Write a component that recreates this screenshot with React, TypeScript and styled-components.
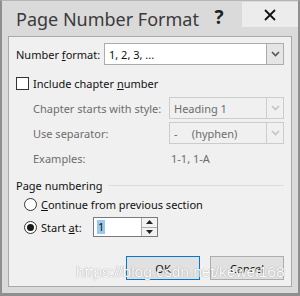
import React from 'react';
import styled, { createGlobalStyle } from 'styled-components';

const GlobalStyle = createGlobalStyle`
html, body {
    margin: 0;
    padding: 0;
    background: #ffffff;
}
* {
    box-sizing: border-box;
}
`;

const Window = styled.div`
position: relative;
width: 300px;
height: 296px;
background: #dadada;
border-left: 2px solid #8f8f8f;
border-right: 2px solid #8f8f8f;
border-bottom: 3px solid #8f8f8f;
border-top: 1px solid #b5b5b5;
display: flex;
flex-direction: column;
font-family: "Noto Sans", "Open Sans", sans-serif;
overflow: hidden;
`;

const TitleBar = styled.div`
height: 35px;
display: flex;
align-items: flex-start;
padding-left: 14px;
`;

const Title = styled.div`
flex: 1;
min-width: 0;
font-size: 18px;
color: #3a3a3a;
padding-top: 6px;
white-space: nowrap;
`;

const HelpButton = styled.div`
width: 22px;
margin-top: 3px;
margin-right: 12px;
font-size: 19px;
font-weight: bold;
color: #222;
text-align: center;
`;

const CloseButton = styled.div`
width: 56px;
height: 25px;
margin-top: 1px;
background: #ececec;
display: flex;
align-items: center;
justify-content: center;
`;

const Client = styled.div`
margin: 0 6px 0 6px;
height: 251px;
background: #f0f0f0;
border: 1px solid #a9a9a9;
padding: 6px 7px 0 7px;
display: flex;
flex-direction: column;
font-size: 11px;
color: #101010;
`;

const Row = styled.div<{ $indent?: number; $mt?: number }>`
display: flex;
align-items: center;
padding-left: ${(p) => p.$indent || 0}px;
margin-top: ${(p) => p.$mt || 0}px;
`;

const Label = styled.span<{ $width?: number; $disabled?: boolean }>`
width: ${(p) => (p.$width ? `${p.$width}px` : 'auto')};
flex-shrink: 0;
color: ${(p) => (p.$disabled ? '#6d6d6d' : '#101010')};
white-space: nowrap;
`;

const Key = styled.span`
text-decoration: underline;
`;

const Combo = styled.div<{ $disabled?: boolean; $width: number }>`
width: ${(p) => p.$width}px;
height: 22px;
display: flex;
background: ${(p) => (p.$disabled ? '#f0f0f0' : '#ffffff')};
border: 1px solid ${(p) => (p.$disabled ? '#cccccc' : '#acacac')};
`;

const ComboText = styled.div<{ $disabled?: boolean }>`
flex: 1;
padding-left: 4px;
display: flex;
align-items: center;
color: ${(p) => (p.$disabled ? '#6d6d6d' : '#101010')};
white-space: pre;
`;

const ComboArrow = styled.div<{ $disabled?: boolean }>`
width: 17px;
display: flex;
align-items: center;
justify-content: center;
background: ${(p) => (p.$disabled ? '#f0f0f0' : '#e5e5e5')};
border-left: 1px solid ${(p) => (p.$disabled ? '#cccccc' : '#acacac')};
`;

const CheckBox = styled.div`
width: 13px;
height: 13px;
border: 1px solid #333;
background: #fff;
margin-right: 4px;
`;

const Radio = styled.div<{ $checked?: boolean }>`
width: 13px;
height: 13px;
border-radius: 50%;
border: 1px solid #333;
background: #fff;
margin-right: 4px;
display: flex;
align-items: center;
justify-content: center;
&::after {
    content: '';
    display: ${(p) => (p.$checked ? 'block' : 'none')};
    width: 7px;
    height: 7px;
    border-radius: 50%;
    background: #1a1a1a;
}
`;

const Group = styled.div`
display: flex;
align-items: center;
margin-top: 12px;
`;

const GroupLine = styled.div`
flex: 1;
height: 1px;
background: #dcdcdc;
margin-left: 6px;
`;

const SpinBox = styled.div`
width: 65px;
height: 20px;
display: flex;
background: #fff;
border: 1px solid #7a7a7a;
`;

const SpinText = styled.div`
flex: 1;
padding-left: 3px;
display: flex;
align-items: center;
`;

const Selected = styled.span`
background: #99c9ef;
line-height: 14px;
padding: 0 1px;
`;

const SpinButtons = styled.div`
width: 16px;
display: flex;
flex-direction: column;
border-left: 1px solid #acacac;
`;

const SpinButton = styled.div`
flex: 1;
display: flex;
align-items: center;
justify-content: center;
background: #f2f2f2;
& + & {
    border-top: 1px solid #acacac;
}
`;

const ButtonRow = styled.div`
display: flex;
justify-content: flex-end;
gap: 10px;
margin-top: 19px;
`;

const Button = styled.div<{ $default?: boolean }>`
width: 74px;
height: 24px;
display: flex;
align-items: center;
justify-content: center;
background: #e1e1e1;
border: 1px solid ${(p) => (p.$default ? '#0078d7' : '#adadad')};
color: #101010;
`;

const Watermark = styled.div`
position: absolute;
left: 74px;
top: 262px;
font-family: "Liberation Sans", Arial, sans-serif;
font-size: 15.5px;
color: #ffffff;
text-shadow: 0 0 1px rgba(110, 110, 110, 0.9);
white-space: nowrap;
pointer-events: none;
`;

const Chevron = ({ color }: { color: string }) => (
    <svg width="9" height="6" viewBox="0 0 9 6">
        <path d="M1 1 L4.5 4.5 L8 1" fill="none" stroke={color} strokeWidth="1.6" />
    </svg>
);

const Tri = ({ up }: { up?: boolean }) => (
    <svg width="7" height="4" viewBox="0 0 7 4">
        <path d={up ? 'M0 4 L3.5 0 L7 4 Z' : 'M0 0 L3.5 4 L7 0 Z'} fill="#222" />
    </svg>
);

const App = () => {
    return (
        <>
            <GlobalStyle />
            <Window>
                <TitleBar>
                    <Title>Page Number Format</Title>
                    <HelpButton>?</HelpButton>
                    <CloseButton>
                        <svg width="12" height="12" viewBox="0 0 12 12">
                            <path d="M1 1 L11 11 M11 1 L1 11" stroke="#111" strokeWidth="1.8" />
                        </svg>
                    </CloseButton>
                </TitleBar>
                <Client>
                    <Row>
                        <Label $width={88}>Number <Key>f</Key>ormat:</Label>
                        <Combo $width={181}>
                            <ComboText>1, 2, 3, ...</ComboText>
                            <ComboArrow><Chevron color="#555" /></ComboArrow>
                        </Combo>
                    </Row>
                    <Row $mt={11}>
                        <CheckBox />
                        <Label>Include chapter <Key>n</Key>umber</Label>
                    </Row>
                    <Row $indent={17} $mt={6}>
                        <Label $width={136} $disabled>Chapter starts with style:</Label>
                        <Combo $width={116} $disabled>
                            <ComboText $disabled>Heading 1</ComboText>
                            <ComboArrow $disabled><Chevron color="#c4c4c4" /></ComboArrow>
                        </Combo>
                    </Row>
                    <Row $indent={17} $mt={3}>
                        <Label $width={136} $disabled>Use separator:</Label>
                        <Combo $width={116} $disabled>
                            <ComboText $disabled>{'-     (hyphen)'}</ComboText>
                            <ComboArrow $disabled><Chevron color="#c4c4c4" /></ComboArrow>
                        </Combo>
                    </Row>
                    <Row $indent={17} $mt={7}>
                        <Label $width={138} $disabled>Examples:</Label>
                        <Label $disabled>1-1, 1-A</Label>
                    </Row>
                    <Group>
                        <Label>Page numbering</Label>
                        <GroupLine />
                    </Group>
                    <Row $indent={8} $mt={4}>
                        <Radio />
                        <Label><Key>C</Key>ontinue from previous section</Label>
                    </Row>
                    <Row $indent={8} $mt={5}>
                        <Radio $checked />
                        <Label $width={52}>Start <Key>a</Key>t:</Label>
                        <SpinBox>
                            <SpinText><Selected>1</Selected></SpinText>
                            <SpinButtons>
                                <SpinButton><Tri up /></SpinButton>
                                <SpinButton><Tri /></SpinButton>
                            </SpinButtons>
                        </SpinBox>
                    </Row>
                    <ButtonRow>
                        <Button $default>OK</Button>
                        <Button>Cancel</Button>
                    </ButtonRow>
                </Client>
                <Watermark>https://blog.csdn.net/kewei168</Watermark>
            </Window>
        </>
    );
};

export default App;
